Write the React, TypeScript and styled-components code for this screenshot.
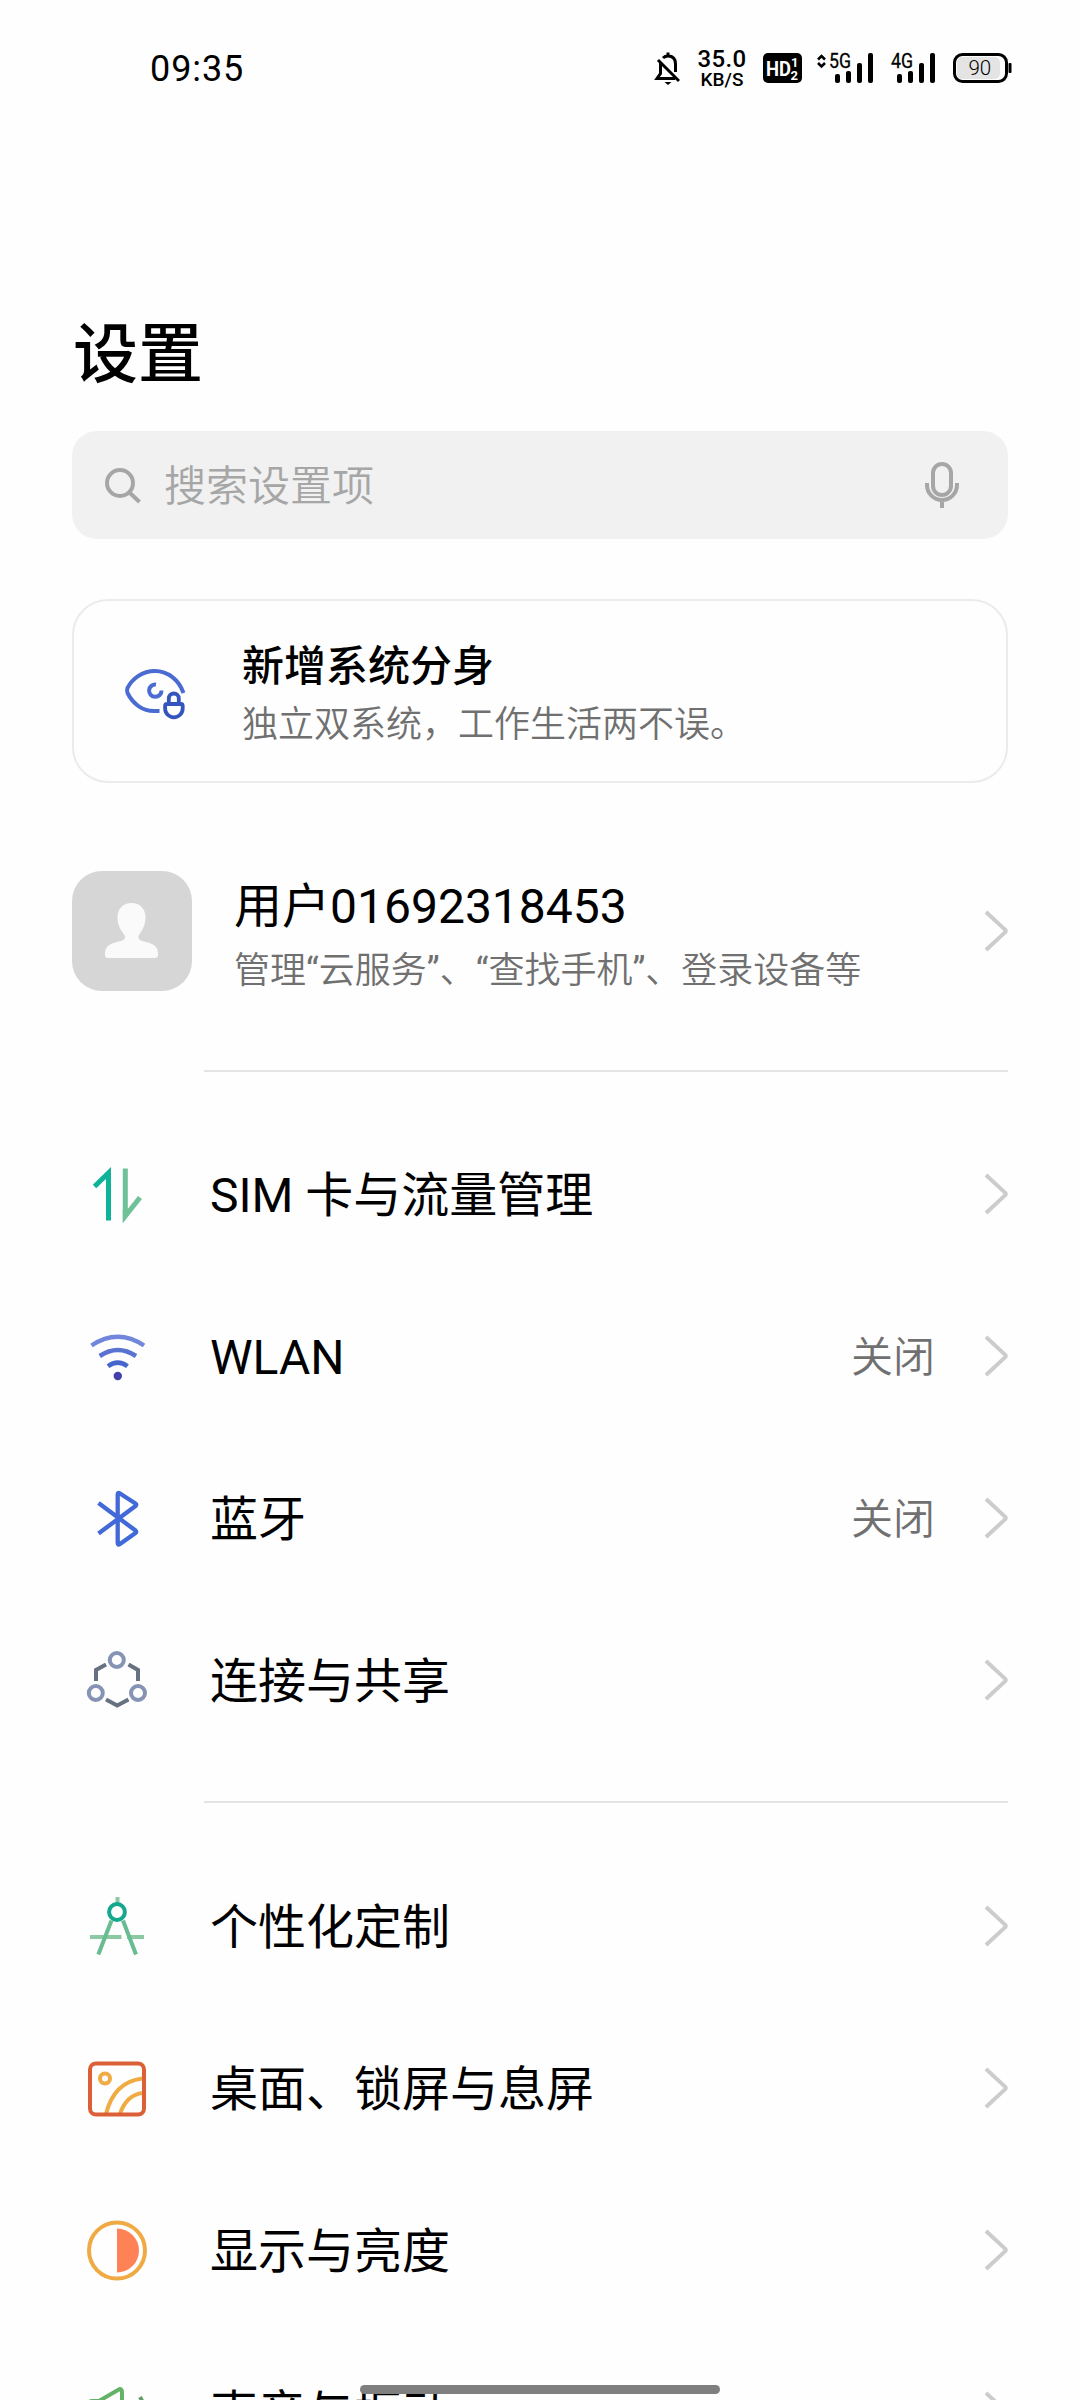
import React from "react";
import styled, { createGlobalStyle } from "styled-components";

const Global = createGlobalStyle`
  * { box-sizing: border-box; }
  html, body { margin: 0; padding: 0; background: #fefefe; }
  body { font-family: Roboto, "Noto Sans CJK SC", sans-serif; color: #000; }
`;

const Screen = styled.div`
  position: relative;
  width: 1080px;
  height: 2400px;
  overflow: hidden;
  background: #fefefe;
  display: flex;
  flex-direction: column;
  > * { flex-shrink: 0; }
`;

const StatusBar = styled.header`
  height: 136px;
  padding: 0 68px 0 150px;
  display: flex;
  align-items: center;
  justify-content: space-between;
`;

const Clock = styled.div`
  font-size: 36px;
  line-height: 40px;
  letter-spacing: 0.9px;
  padding-top: 1px;
`;

const StatusIcons = styled.div`
  display: flex;
  align-items: center;
  svg { display: block; }
`;

const Speed = styled.div`
  width: 50px;
  margin: 0 15px 0 17px;
  display: flex;
  flex-direction: column;
  align-items: center;
  font-weight: 500;
`;

const SpeedValue = styled.span`
  font-size: 24px;
  line-height: 22px;
  letter-spacing: 0.4px;
`;

const SpeedUnit = styled.span`
  font-size: 19px;
  line-height: 19px;
`;

const Title = styled.h1`
  margin: 171px 0 0 73px;
  height: 96px;
  font-size: 65px;
  line-height: 96px;
  font-weight: 500;
`;

const SearchBar = styled.div`
  margin: 28px 72px 0;
  height: 108px;
  border-radius: 25px;
  background: #f1f1f1;
  display: flex;
  align-items: center;
  padding: 0 48px 0 32px;
`;

const Placeholder = styled.span`
  flex: 1;
  margin-left: 22px;
  padding-top: 4px;
  font-size: 42px;
  line-height: 60px;
  font-weight: 350;
  color: #a6a6a6;
`;

const Card = styled.section`
  margin: 60px 72px 0;
  height: 184px;
  border: 2px solid #ebebeb;
  border-radius: 36px;
  display: flex;
  align-items: center;
  padding-left: 50px;
`;

const CardText = styled.div`
  margin-left: 48px;
  padding-top: 8px;
`;

const CardTitle = styled.div`
  font-size: 42px;
  line-height: 60px;
  font-weight: 500;
`;

const Sub = styled.div`
  font-size: 36px;
  line-height: 56px;
  font-weight: 350;
  color: #707070;
`;

const Quote = styled.span`
  font-weight: 400;
`;

const Account = styled.section`
  margin: 78px 71px 0 72px;
  height: 140px;
  display: flex;
  align-items: center;
`;

const Avatar = styled.div`
  width: 120px;
  height: 120px;
  border-radius: 30px;
  background: #d6d6d6;
`;

const AccountText = styled.div`
  flex: 1;
  margin-left: 42px;
  padding-top: 7px;
`;

const AccountName = styled.div`
  font-size: 48px;
  line-height: 72px;
`;

const Divider = styled.hr<{ $top?: number }>`
  margin: ${(p) => p.$top ?? 0}px 72px 0 204px;
  border: 0;
  height: 2px;
  background: #e4e4e4;
`;

const Group = styled.ul<{ $top: number; $bottom: number }>`
  list-style: none;
  margin: 0;
  padding: ${(p) => p.$top}px 71px ${(p) => p.$bottom}px 72px;
`;

const Row = styled.li`
  height: 162px;
  display: flex;
  align-items: center;
`;

const IconBox = styled.span`
  width: 90px;
  height: 90px;
  margin-right: 48px;
  svg { display: block; }
`;

const Label = styled.span`
  flex: 1;
  padding-top: 4px;
  font-size: 48px;
  line-height: 70px;
`;

const Value = styled.span`
  margin-right: 48px;
  padding-top: 4px;
  font-size: 42px;
  line-height: 60px;
  font-weight: 350;
  color: #707070;
`;

const HomeBar = styled.div`
  position: absolute;
  left: 360px;
  top: 2385px;
  width: 360px;
  height: 9px;
  border-radius: 5px;
  background: #7f7f7f;
`;

const Chevron = () => (
  <svg width="26" height="44" viewBox="0 0 26 44" fill="none" stroke="#cccccc" strokeWidth="4">
    <path d="M3 3L22 20.6Q23.600 22 22 23.400L3 41" />
  </svg>
);

const Icon = ({ children }: { children: React.ReactNode }) => (
  <IconBox>
    <svg width="90" height="90" viewBox="0 0 90 90" fill="none">{children}</svg>
  </IconBox>
);

const SimIcon = () => (
  <Icon>
    <path d="M22.500 37.500L36.500 24V71.500" stroke="#0fb39a" strokeWidth="5" />
    <path d="M33 25L39 19V32H34Z" fill="#0fb39a" />
    <path d="M53.300 19.500V67L68 48.500" stroke="#6fc197" strokeWidth="5" />
    <path d="M50.800 60V73L57.500 65Z" fill="#6fc197" />
  </Icon>
);

const WifiIcon = () => (
  <Icon>
    <path d="M19.500 34.500Q45.800 17 72 34.500" stroke="#7287db" strokeWidth="4.500" />
    <path d="M27.700 45Q45.800 33 64 45" stroke="#5a72d0" strokeWidth="4.500" />
    <path d="M36 55.300Q45.800 48 55.500 55.300" stroke="#4465cc" strokeWidth="4.500" />
    <circle cx="45.800" cy="65" r="4.200" fill="#443fae" />
  </Icon>
);

const BluetoothIcon = () => (
  <Icon>
    <path d="M26.500 30L63.500 57.500Q65 59 63.500 60L48 71Q45.700 72.500 45.700 70V21.500Q45.700 19 48 20.500L63.500 30.500Q65 31.500 63.500 33L26.500 60.500" stroke="#4169d8" strokeWidth="4.300" strokeLinejoin="round" />
  </Icon>
);

const ShareIcon = () => (
  <Icon>
    <path d="M34 29.500L24 35V46M56.500 29.500L66 35V46M34 64.500L45.200 70.500L56.500 64.500" stroke="#687180" strokeWidth="4" />
    <g stroke="#8793b5" strokeWidth="4">
      <circle cx="44.800" cy="25" r="7" /><circle cx="23.800" cy="58" r="7" /><circle cx="66" cy="58" r="7" />
    </g>
  </Icon>
);

const CompassIcon = () => (
  <Icon>
    <path d="M45.500 16V22M18 56H49.500M55 56H72" stroke="#8bc9a2" strokeWidth="4" />
    <path d="M39.500 39.500L26.300 73.500M51 39.500L64 73.500" stroke="#67bd91" strokeWidth="4" />
    <circle cx="45" cy="31" r="7.900" stroke="#16a88e" strokeWidth="4" fill="#fefefe" />
  </Icon>
);

const WallpaperIcon = () => (
  <Icon>
    <path d="M34 71Q42 39 70 35.500M48 71Q54 52.500 70 50" stroke="#f0ac42" strokeWidth="4" />
    <circle cx="33" cy="35.500" r="5" stroke="#f0ac42" strokeWidth="4" />
    <rect x="18" y="20.500" width="54" height="51" rx="6" stroke="#dc6037" strokeWidth="4" />
  </Icon>
);

const BrightnessIcon = () => (
  <Icon>
    <circle cx="45" cy="45.500" r="28" stroke="#efaa43" strokeWidth="4" />
    <path d="M45 23.500A22 22 0 0 1 45 67.500Z" fill="#fe8256" />
  </Icon>
);

const SoundIcon = () => (
  <Icon>
    <path d="M17 37Q17 34 20 34H27L46 23Q50 20.500 50 25V65Q50 69.500 46 67L27 56H20Q17 56 17 53Z" stroke="#65b366" strokeWidth="4" />
    <path d="M68 30Q77 45 68 60" stroke="#5f9f6c" strokeWidth="4" />
  </Icon>
);

const EyeLockIcon = () => (
  <svg width="70" height="60" viewBox="0 0 70 60" fill="none">
    <path d="M59.500 32C55 19 44 10 31 10C18 10 8 18 3.500 27Q2.500 29.500 3.500 32C9 43 19 50.500 31 50H35.500" stroke="#4a6bd2" strokeWidth="4" />
    <path d="M32 23.500A6.200 6.200 0 1 0 37.500 29.500" stroke="#4a6bd2" strokeWidth="4" />
    <path d="M43 43H57Q58.700 43 58.700 45V47.500A8.800 8.800 0 0 1 41.100 47.500V45Q41.100 43 43 43ZM44.800 43V37.500A5 5 0 0 1 54.800 37.500V43" stroke="#3355bd" strokeWidth="3.800" strokeLinejoin="round" />
  </svg>
);

const StatusGlyphs = () => (
  <svg width="250" height="40" viewBox="0 0 250 40" fontFamily="Roboto, sans-serif">
    <rect x="1" y="5" width="39" height="30" rx="5" />
    <text x="4" y="28" fontSize="21" fontWeight="700" fill="#fff" textLength="25" lengthAdjust="spacingAndGlyphs">HD</text>
    <text x="29" y="19" fontSize="13" fontWeight="700" fill="#fff">1</text>
    <text x="28.500" y="32" fontSize="13" fontWeight="700" fill="#fff">2</text>
    <path d="M56 11.500L59.500 8L63 11.500M56 15L59.500 18.500L63 15" fill="none" stroke="#000" strokeWidth="2.600" />
    <text x="67" y="19.500" fontSize="19.500" fontWeight="400" stroke="#000" strokeWidth="0.300" textLength="22" lengthAdjust="spacingAndGlyphs">5G</text>
    <rect x="73" y="26" width="5" height="9" rx="2" /><rect x="84" y="23" width="5" height="12" rx="2" />
    <rect x="95" y="15" width="5" height="20" rx="2" /><rect x="106" y="5" width="5" height="30" rx="2" />
    <text x="129" y="19.500" fontSize="19.500" fontWeight="400" stroke="#000" strokeWidth="0.300" textLength="22" lengthAdjust="spacingAndGlyphs">4G</text>
    <rect x="135" y="26" width="5" height="9" rx="2" /><rect x="146" y="23" width="5" height="12" rx="2" />
    <rect x="157" y="15" width="5" height="20" rx="2" /><rect x="168" y="5" width="5" height="30" rx="2" />
    <rect x="192.500" y="6.500" width="52" height="27" rx="8" fill="#fefefe" stroke="#000" strokeWidth="3" />
    <rect x="195" y="9" width="43" height="22" rx="5" fill="#e4e4e4" />
    <rect x="246.500" y="15" width="3" height="10" rx="1" />
    <text x="206.500" y="27" fontSize="20.500" fontWeight="300">90</text>
  </svg>
);

const MutedBell = () => (
  <svg width="26" height="40" viewBox="0 0 26 40" fill="none" stroke="#000" strokeWidth="3">
    <path d="M4 12L25 33M9 10Q11 8 14 8Q21.500 8 21.500 16V24M6.500 15V25.500L3 30.500H21M14 8V4.500" />
    <path d="M10.500 34H17.500L14 37Z" fill="#000" stroke="none" />
  </svg>
);

const connectivity = [
  { icon: <SimIcon />, label: "SIM 卡与流量管理" },
  { icon: <WifiIcon />, label: "WLAN", value: "关闭" },
  { icon: <BluetoothIcon />, label: "蓝牙", value: "关闭" },
  { icon: <ShareIcon />, label: "连接与共享" },
];

const personal = [
  { icon: <CompassIcon />, label: "个性化定制" },
  { icon: <WallpaperIcon />, label: "桌面、锁屏与息屏" },
  { icon: <BrightnessIcon />, label: "显示与亮度" },
  { icon: <SoundIcon />, label: "声音与振动" },
];

type Item = { icon: React.ReactNode; label: string; value?: string };

const Rows = ({ items }: { items: Item[] }) => (
  <>
    {items.map((it) => (
      <Row key={it.label}>
        {it.icon}
        <Label>{it.label}</Label>
        {it.value && <Value>{it.value}</Value>}
        <Chevron />
      </Row>
    ))}
  </>
);

export default function App() {
  return (
    <Screen>
      <Global />
      <StatusBar>
        <Clock>09:35</Clock>
        <StatusIcons>
          <MutedBell />
          <Speed>
            <SpeedValue>35.0</SpeedValue>
            <SpeedUnit>KB/S</SpeedUnit>
          </Speed>
          <StatusGlyphs />
        </StatusIcons>
      </StatusBar>
      <Title>设置</Title>
      <SearchBar>
        <svg width="38" height="38" viewBox="0 0 38 38" fill="none" stroke="#a6a6a6" strokeWidth="4">
          <circle cx="16" cy="17" r="13" /><path d="M25.500 26.500L35.500 36" />
        </svg>
        <Placeholder>搜索设置项</Placeholder>
        <svg width="36" height="48" viewBox="0 0 36 48" fill="none" stroke="#a6a6a6" strokeWidth="4">
          <rect x="9" y="3" width="18" height="31" rx="9" />
          <path d="M3 22V24A15 15 0 0 0 33 24V22M18 39V47" />
        </svg>
      </SearchBar>
      <Card>
        <EyeLockIcon />
        <CardText>
          <CardTitle>新增系统分身</CardTitle>
          <Sub>独立双系统，工作生活两不误。</Sub>
        </CardText>
      </Card>
      <Account>
        <Avatar>
          <svg width="120" height="120" viewBox="0 0 120 120" fill="#fafafa">
            <path d="M59.500 32C68 32 73.500 38 73.500 46C73.500 56 69 60 66.500 65C65.500 69 70 70 74 71C82 73 86 76 86 82V84Q86 87 83 87H36Q33 87 33 84V82C33 76 37 73 45 71C49 70 54 69 53 65C50 60 45.500 56 45.500 46C45.500 38 51 32 59.500 32Z" />
          </svg>
        </Avatar>
        <AccountText>
          <AccountName>用户01692318453</AccountName>
          <Sub>
            管理<Quote>“</Quote>云服务<Quote>”</Quote>、<Quote>“</Quote>查找手机<Quote>”</Quote>、登录设备等
          </Sub>
        </AccountText>
        <Chevron />
      </Account>
      <Divider $top={69} />
      <Group $top={41} $bottom={40}><Rows items={connectivity} /></Group>
      <Divider />
      <Group $top={42} $bottom={0}><Rows items={personal} /></Group>
      <HomeBar />
    </Screen>
  );
}
